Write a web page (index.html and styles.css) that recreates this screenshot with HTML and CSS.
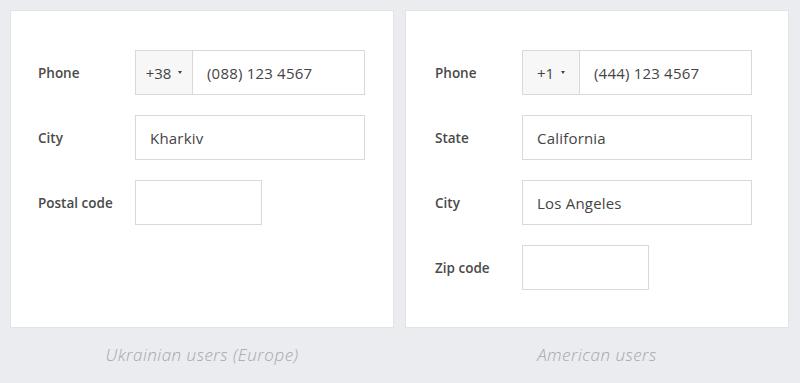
FILE: index.html
```html
<!DOCTYPE html>
<html lang="en">

<head>
    <meta charset="UTF-8">
    <meta name="viewport" content="width=device-width, initial-scale=1.0">
    <title>Address forms</title>
    <link rel="stylesheet" href="styles.css">
</head>

<body>
    <div class="page">
        <div class="column">
            <form class="card card-eu">
                <label class="label">Phone</label>
                <div class="phone">
                    <div class="prefix">+38 <span class="caret"></span></div>
                    <input type="text" class="field phone-input" value="(088) 123 4567" />
                </div>

                <label class="label">City</label>
                <input type="text" class="field" value="Kharkiv" />

                <label class="label">Postal code</label>
                <input type="text" class="field short" value="" />
            </form>
            <p class="caption">Ukrainian users (Europe)</p>
        </div>

        <div class="column">
            <form class="card card-us">
                <label class="label">Phone</label>
                <div class="phone">
                    <div class="prefix">+1 <span class="caret"></span></div>
                    <input type="text" class="field phone-input" value="(444) 123 4567" />
                </div>

                <label class="label">State</label>
                <input type="text" class="field" value="California" />

                <label class="label">City</label>
                <input type="text" class="field" value="Los Angeles" />

                <label class="label">Zip code</label>
                <input type="text" class="field short" value="" />
            </form>
            <p class="caption">American users</p>
        </div>
    </div>
</body>

</html>
```

FILE: styles.css
```css
body {
    margin: 0;
    background-color: #ebecef;
    font-family: "Open Sans", Lato, sans-serif;
    color: #333;
}

.page {
    display: grid;
    grid-template-columns: 384px 384px;
    gap: 11px;
    padding: 10px 0 0 10px;
}

.card {
    box-sizing: border-box;
    height: 318px;
    margin: 0;
    padding: 39px 0 0 27px;
    background-color: #fff;
    border: 1px solid #e2e3e7;
    display: grid;
    grid-auto-rows: 45px;
    row-gap: 20px;
    align-items: center;
    align-content: start;
}

.card-eu {
    grid-template-columns: 97px 230px;
}

.card-us {
    padding-left: 29px;
    grid-template-columns: 87px 230px;
}

.label {
    font-size: 13.5px;
    font-weight: 600;
    color: #4a4a4a;
}

.field {
    box-sizing: border-box;
    width: 230px;
    height: 45px;
    padding: 0 14px;
    border: 1px solid #d9d9d9;
    border-radius: 0;
    font-family: inherit;
    font-size: 15px;
    letter-spacing: 0.2px;
    color: #444;
    outline: none;
}

.short {
    width: 127px;
}

.phone {
    display: flex;
    width: 230px;
    height: 45px;
    box-sizing: border-box;
    border: 1px solid #d9d9d9;
}

.prefix {
    flex: none;
    width: 57px;
    box-sizing: border-box;
    display: flex;
    align-items: center;
    justify-content: center;
    gap: 7px;
    background-color: #f7f7f7;
    border-right: 1px solid #d9d9d9;
    font-size: 15px;
    color: #444;
}

.caret {
    width: 0;
    height: 0;
    border-left: 2.5px solid transparent;
    border-right: 2.5px solid transparent;
    border-top: 3px solid #444;
}

.phone-input {
    flex: 1;
    width: auto;
    min-width: 0;
    height: 43px;
    border: none;
}

.caption {
    margin: 15px 0 0;
    text-align: center;
    font-size: 17px;
    letter-spacing: 0.5px;
    font-style: italic;
    font-weight: 300;
    color: #a4a7ad;
}
```
